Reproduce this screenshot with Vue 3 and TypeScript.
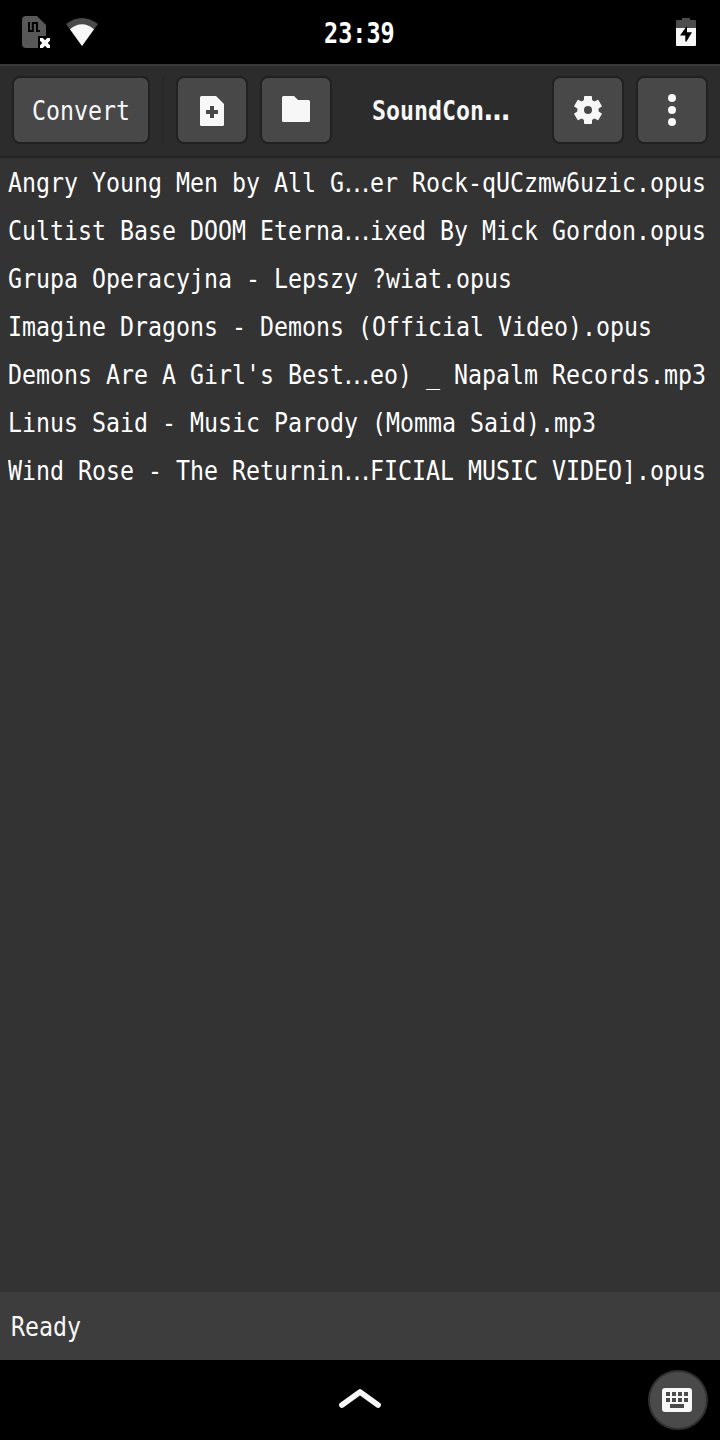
<script setup lang="ts">
interface Entry {
  head: string
  tail?: string
}

const files: Entry[] = [
  { head: 'Angry Young Men by All G', tail: 'er Rock-qUCzmw6uzic.opus' },
  { head: 'Cultist Base DOOM Eterna', tail: 'ixed By Mick Gordon.opus' },
  { head: 'Grupa Operacyjna - Lepszy ?wiat.opus' },
  { head: 'Imagine Dragons - Demons (Official Video).opus' },
  { head: "Demons Are A Girl's Best", tail: 'eo) _ Napalm Records.mp3' },
  { head: 'Linus Said - Music Parody (Momma Said).mp3' },
  { head: 'Wind Rose - The Returnin', tail: 'FICIAL MUSIC VIDEO].opus' },
]
</script>

<template>
  <div class="phone">
    <header class="status">
      <div class="status-left">
        <svg class="sim" width="30" height="34" viewBox="0 0 30 34">
          <path d="M4 0H15L24 9V20H16V32H4Q0 32 0 28V4Q0 0 4 0Z" fill="#585858" />
          <path d="M7 6V15H10.8V7H15V15H18" fill="none" stroke="#000" stroke-width="2" />
          <path d="M18 22H20.8L23 24.3L25.2 22H28V24.8L25.7 27L28 29.2V32H25.2L23 29.7L20.8 32H18V29.2L20.3 27L18 24.8Z" fill="#fff" />
        </svg>
        <svg width="32" height="29" viewBox="0 0 32 29">
          <path d="M0 6Q16 -6 32 6L16 28Z" fill="#4a4a4a" />
          <path d="M4 11.2Q16 1.5 28 11.2L16 28Z" fill="#f7f7f7" />
        </svg>
      </div>
      <span class="clock"><span class="clock-text">23:39</span></span>
      <svg class="battery" width="20" height="28" viewBox="0 0 20 28">
        <path d="M0 10V3Q0 2 1 2H6V0H14V2H19Q20 2 20 3V10Z" fill="#4d4d4d" />
        <path d="M0 10H20V27Q20 28 19 28H1Q0 28 0 27Z" fill="#f7f7f7" />
        <path d="M10.5 8.5L4 17.5H9.3V23.5H10.5L16 14.3H11V8.5Z" fill="#000" />
      </svg>
    </header>

    <div class="toolbar">
      <button class="btn convert"><span class="mono">Convert</span></button>
      <i class="divider"></i>
      <button class="btn add">
        <svg width="24" height="30" viewBox="0 0 24 30">
          <path d="M1.5 0H16L24 8V28.5Q24 30 22.5 30H1.5Q0 30 0 28.5V1.5Q0 0 1.5 0Z" fill="#f7f7f7" />
          <path d="M10 10H14V14H18V18H14V22H10V18H6V14H10Z" fill="#484848" />
        </svg>
      </button>
      <button class="btn folder">
        <svg width="28" height="26" viewBox="0 0 28 26">
          <path d="M1.5 0H12L16 4H26.5Q28 4 28 5.5V24.5Q28 26 26.5 26H1.5Q0 26 0 24.5V1.5Q0 0 1.5 0Z" fill="#f7f7f7" />
        </svg>
      </button>
      <h1 class="title"><span class="mono">SoundCon<span class="dots">…</span></span></h1>
      <button class="btn settings">
        <svg width="28" height="28" viewBox="-14 -14 28 28">
          <g fill="#f7f7f7">
            <circle r="10.6" />
            <path v-for="n in 6" :key="n" :transform="`rotate(${n * 60})`" d="M-5 -8L-4 -10.4V-13.2Q-4 -14 -3.2 -14H3.2Q4 -14 4 -13.2V-10.4L5 -8Z" />
          </g>
          <circle r="4" fill="#484848" />
        </svg>
      </button>
      <button class="btn more">
        <svg width="8" height="32" viewBox="0 0 8 32" fill="#f7f7f7">
          <circle cx="4" cy="4" r="4" /><circle cx="4" cy="16" r="4" /><circle cx="4" cy="28" r="4" />
        </svg>
      </button>
    </div>

    <main class="list">
      <div v-for="file in files" :key="file.head" class="row">
        <span class="mono">{{ file.head }}<template v-if="file.tail"><span class="dots">…</span>{{ file.tail }}</template></span>
      </div>
    </main>

    <div class="ready"><span class="mono">Ready</span></div>

    <footer class="nav">
      <svg class="chevron" width="42" height="22" viewBox="0 0 42 22">
        <path d="M3 17L21 4L39 17" fill="none" stroke="#f7f7f7" stroke-width="5.8" stroke-linecap="round" stroke-linejoin="round" />
      </svg>
      <button class="keyboard">
        <svg width="30" height="24" viewBox="0 0 30 24">
          <rect width="30" height="24" rx="3" fill="#f7f7f7" />
          <path d="M4 4h4v4h-4zM10 4h4v4h-4zM16 4h4v4h-4zM22 4h4v4h-4zM4 10h4v4h-4zM10 10h4v4h-4zM16 10h4v4h-4zM22 10h4v4h-4zM8 16h14v4h-14z" fill="#4a4a4a" />
        </svg>
      </button>
    </footer>
  </div>
</template>

<style>
body {
  margin: 0;
  background: #000;
}
</style>

<style scoped>
.phone {
  width: 720px;
  height: 1440px;
  display: flex;
  flex-direction: column;
  background: #333;
  color: #fff;
  overflow: hidden;
  font-family: "DejaVu Sans Mono", monospace;
  font-size: 26px;
}
svg {
  display: block;
  flex: none;
}
.mono {
  display: block;
  width: max-content;
  white-space: pre;
  line-height: 32px;
  font-variant-ligatures: none;
  transform: scaleX(0.8945);
  transform-origin: 0 50%;
}
.dots {
  font-family: "DejaVu Sans", sans-serif;
  font-size: 29px;
  line-height: 1;
}
.status {
  height: 64px;
  flex: none;
  display: grid;
  grid-template-columns: 1fr 70px 1fr;
  background: #000;
}
.status-left {
  display: flex;
  gap: 14px;
  padding: 16px 0 0 22px;
}
.status-left svg + svg {
  margin-top: 2px;
}
.clock {
  margin-left: -1px;
  font-size: 29px;
  font-weight: bold;
  line-height: 66px;
}
.clock-text {
  display: block;
  width: max-content;
  transform: scaleX(0.81);
  transform-origin: 0 50%;
}
.battery {
  justify-self: end;
  margin: 18px 24px 0 0;
}
.toolbar {
  height: 94px;
  flex: none;
  box-sizing: border-box;
  display: flex;
  padding: 10px 12px 0;
  background: #2c2c2c;
  border-top: 2px solid #383838;
  border-bottom: 2px solid #242424;
}
.btn {
  width: 72px;
  height: 68px;
  flex: none;
  box-sizing: border-box;
  display: flex;
  align-items: center;
  justify-content: center;
  padding: 0;
  border: 2px solid #212121;
  border-radius: 8px;
  background: #484848;
  color: #f7f7f7;
  font: inherit;
}
.convert {
  width: 138px;
  justify-content: flex-start;
  padding: 2px 0 0 18px;
}
.divider {
  width: 2px;
  height: 68px;
  margin: 0 12px;
  background: #292929;
}
.add svg {
  margin-top: 2px;
}
.folder {
  margin-left: 12px;
}
.folder svg {
  margin-bottom: 2px;
}
.title {
  flex: 1;
  margin: 19px 0 0;
  padding-left: 40px;
  font-size: 26px;
  font-weight: bold;
  color: #f7f7f7;
  min-width: 0;
}
.more {
  margin-left: 12px;
}
.list {
  flex: 1;
  padding: 1px 8px 0;
}
.row {
  height: 48px;
  display: flex;
  align-items: center;
}
.ready {
  height: 68px;
  flex: none;
  box-sizing: border-box;
  display: flex;
  align-items: center;
  padding: 2px 0 0 11px;
  background: #3d3d3d;
  color: #f7f7f7;
}
.nav {
  height: 80px;
  flex: none;
  display: grid;
  grid-template-columns: 1fr 42px 1fr;
  align-items: center;
  background: #000;
}
.chevron {
  grid-column: 2;
  margin-bottom: 2px;
}
.keyboard {
  width: 60px;
  height: 60px;
  box-sizing: border-box;
  justify-self: end;
  margin-right: 12px;
  padding: 0 2px 0 0;
  display: flex;
  align-items: center;
  justify-content: center;
  border: 2px solid #303030;
  border-radius: 50%;
  background: #4a4a4a;
}
</style>
